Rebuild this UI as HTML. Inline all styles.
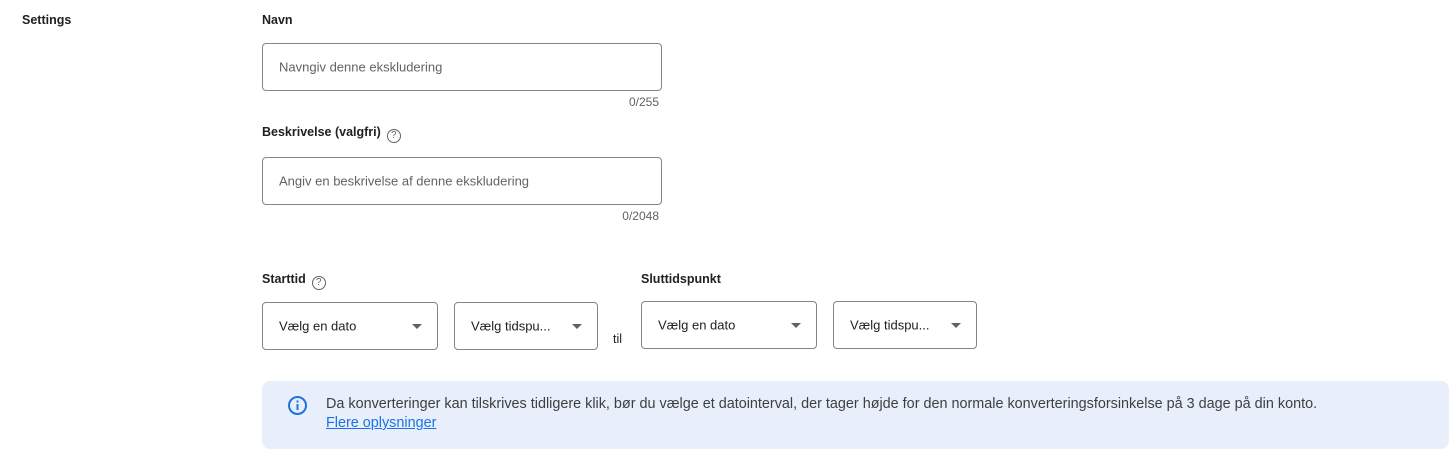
<!DOCTYPE html>
<html><head><style>
body{margin:0;width:1455px;height:458px;background:#fff;font-family:"Liberation Sans",Arial,sans-serif;color:#202124;position:relative;overflow:hidden}
.a{position:absolute;white-space:nowrap}
.lbl{font-weight:bold;font-size:12.5px}
.box{position:absolute;border:1px solid #80868b;border-radius:4px;box-sizing:border-box;background:#fff}
.ph{position:absolute;left:16px;top:50%;transform:translateY(-50%);font-size:13px;color:#5f6368}
.dd .ph{color:#202124}
.arr{position:absolute;right:15px;top:50%;margin-top:-2px;width:0;height:0;border-left:5px solid transparent;border-right:5px solid transparent;border-top:5px solid #5f6368}
.cnt{font-size:12px;color:#5f6368;text-align:right}
.q{display:inline-block;width:12px;height:12px;border:1.3px solid #5f6368;border-radius:50%;font-size:10px;line-height:12px;text-align:center;color:#5f6368;font-weight:normal;vertical-align:-2px;margin-left:6px}
</style></head><body>
<div class="a lbl" style="left:22px;top:13px">Settings</div>
<div class="a lbl" style="left:262px;top:13px">Navn</div>
<div class="box" style="left:262px;top:43px;width:400px;height:48px"><span class="ph">Navngiv denne ekskludering</span></div>
<div class="a cnt" style="left:560px;width:99px;top:95px">0/255</div>
<div class="a lbl" style="left:262px;top:125px">Beskrivelse (valgfri)<span class="q">?</span></div>
<div class="box" style="left:262px;top:157px;width:400px;height:48px"><span class="ph">Angiv en beskrivelse af denne ekskludering</span></div>
<div class="a cnt" style="left:560px;width:99px;top:209px">0/2048</div>
<div class="a lbl" style="left:262px;top:272px">Starttid<span class="q">?</span></div>
<div class="a lbl" style="left:641px;top:272px">Sluttidspunkt</div>
<div class="box dd" style="left:262px;top:302px;width:176px;height:48px"><span class="ph">Vælg en dato</span><span class="arr"></span></div>
<div class="box dd" style="left:454px;top:302px;width:144px;height:48px"><span class="ph">Vælg tidspu...</span><span class="arr"></span></div>
<div class="a" style="left:613px;top:332px;font-size:12.5px">til</div>
<div class="box dd" style="left:641px;top:301px;width:176px;height:48px"><span class="ph">Vælg en dato</span><span class="arr"></span></div>
<div class="box dd" style="left:833px;top:301px;width:144px;height:48px"><span class="ph">Vælg tidspu...</span><span class="arr"></span></div>
<div class="a" style="left:262px;top:381px;width:1187px;height:68px;background:#e8effb;border-radius:8px"></div>
<svg class="a" style="left:287px;top:395px" width="21" height="21" viewBox="0 0 21 21"><circle cx="10.5" cy="10.5" r="8.5" fill="none" stroke="#1a73e8" stroke-width="2"/><rect x="9.5" y="9" width="2" height="6" fill="#1a73e8"/><rect x="9.5" y="5.5" width="2" height="2" fill="#1a73e8"/></svg>
<div class="a" style="left:326px;top:396px;font-size:14.4px;color:#3c4043">Da konverteringer kan tilskrives tidligere klik, bør du vælge et datointerval, der tager højde for den normale konverteringsforsinkelse på 3 dage på din konto.</div>
<div class="a" style="left:326px;top:415px;font-size:14.4px;color:#1a73e8;text-decoration:underline">Flere oplysninger</div>
</body></html>
